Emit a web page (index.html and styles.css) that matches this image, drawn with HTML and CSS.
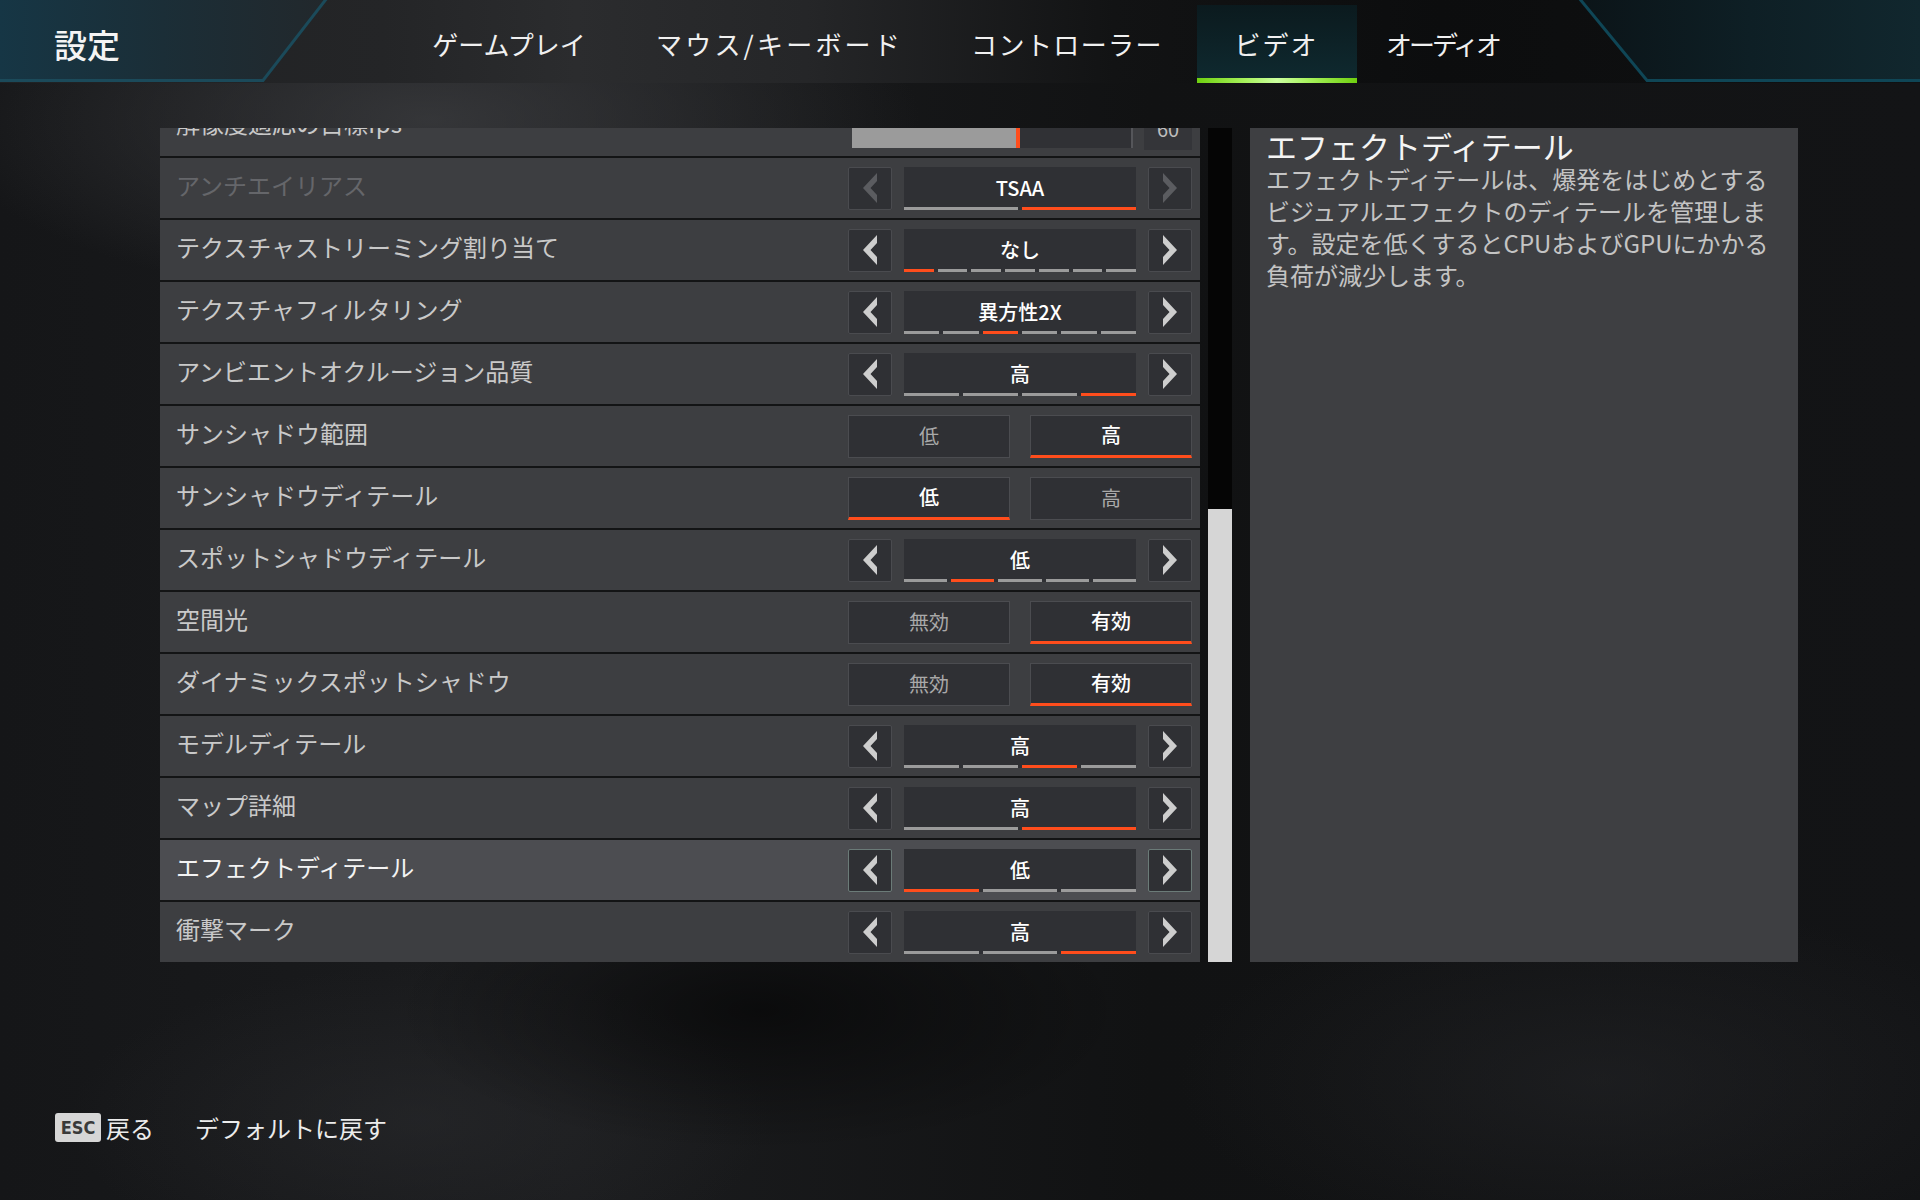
FILE: index.html
```html
<!DOCTYPE html>
<html lang="ja">
<head>
<meta charset="utf-8">
<title>設定</title>
<link rel="stylesheet" href="styles.css">
</head>
<body>
<header class="topbar">
  <div class="hdr-left">
    <svg class="hdr-deco" width="345" height="83" viewBox="0 0 345 83">
      <defs>
        <linearGradient id="gl" x1="0" y1="0" x2="1" y2="0">
          <stop offset="0" stop-color="#163645"/>
          <stop offset="0.5" stop-color="#1b2e37"/>
          <stop offset="1" stop-color="#22282c"/>
        </linearGradient>
      </defs>
      <polygon points="0,0 326,0 263,81 0,81" fill="url(#gl)"/>
      <polyline points="327,-2 263,80.5 0,80.5" fill="none" stroke="#1b4a5a" stroke-width="3"/>
    </svg>
    <h1 class="title">設定</h1>
  </div>
  <nav class="tabs">
    <div class="tab t-game">ゲームプレイ</div>
    <div class="tab t-mouse">マウス/キーボード</div>
    <div class="tab t-ctrl">コントローラー</div>
    <div class="tab t-video active">ビデオ</div>
    <div class="tab t-audio">オーディオ</div>
  </nav>
  <div class="hdr-right">
    <svg class="hdr-deco" width="345" height="83" viewBox="0 0 345 83">
      <defs>
        <linearGradient id="gr" x1="0" y1="0" x2="1" y2="0">
          <stop offset="0" stop-color="#0b1418"/>
          <stop offset="0.5" stop-color="#0e1f25"/>
          <stop offset="1" stop-color="#11272e"/>
        </linearGradient>
      </defs>
      <polygon points="5,0 345,0 345,81 72,81" fill="url(#gr)"/>
      <polyline points="4,-2 72,80.5 345,80.5" fill="none" stroke="#0f4656" stroke-width="3"/>
    </svg>
  </div>
</header>

<main class="content">
  <div class="list">
    <div class="row partial">
      <div class="label">解像度適応の目標fps</div>
      <div class="slider">
        <div class="track"><div class="fill" style="width:164px"></div><div class="knob"></div></div>
        <div class="sval">60</div>
      </div>
    </div>

    <div class="row disabled">
      <div class="label">アンチエイリアス</div>
      <div class="ctl">
        <div class="arrow dis"><svg viewBox="0 0 14 30" width="14" height="30"><polygon points="14,0 0,15 14,30 14,22 7.5,15 14,8"/></svg></div>
        <div class="value"><span class="val-text">TSAA</span><div class="segs"><i class="seg"></i><i class="seg on"></i></div></div>
        <div class="arrow dis"><svg viewBox="0 0 14 30" width="14" height="30"><polygon points="0,0 14,15 0,30 0,22 6.5,15 0,8"/></svg></div>
      </div>
    </div>

    <div class="row">
      <div class="label">テクスチャストリーミング割り当て</div>
      <div class="ctl">
        <div class="arrow"><svg viewBox="0 0 14 30" width="14" height="30"><polygon points="14,0 0,15 14,30 14,22 7.5,15 14,8"/></svg></div>
        <div class="value"><span class="val-text">なし</span><div class="segs"><i class="seg on"></i><i class="seg"></i><i class="seg"></i><i class="seg"></i><i class="seg"></i><i class="seg"></i><i class="seg"></i></div></div>
        <div class="arrow"><svg viewBox="0 0 14 30" width="14" height="30"><polygon points="0,0 14,15 0,30 0,22 6.5,15 0,8"/></svg></div>
      </div>
    </div>

    <div class="row">
      <div class="label">テクスチャフィルタリング</div>
      <div class="ctl">
        <div class="arrow"><svg viewBox="0 0 14 30" width="14" height="30"><polygon points="14,0 0,15 14,30 14,22 7.5,15 14,8"/></svg></div>
        <div class="value"><span class="val-text">異方性2X</span><div class="segs"><i class="seg"></i><i class="seg"></i><i class="seg on"></i><i class="seg"></i><i class="seg"></i><i class="seg"></i></div></div>
        <div class="arrow"><svg viewBox="0 0 14 30" width="14" height="30"><polygon points="0,0 14,15 0,30 0,22 6.5,15 0,8"/></svg></div>
      </div>
    </div>

    <div class="row">
      <div class="label">アンビエントオクルージョン品質</div>
      <div class="ctl">
        <div class="arrow"><svg viewBox="0 0 14 30" width="14" height="30"><polygon points="14,0 0,15 14,30 14,22 7.5,15 14,8"/></svg></div>
        <div class="value"><span class="val-text">高</span><div class="segs"><i class="seg"></i><i class="seg"></i><i class="seg"></i><i class="seg on"></i></div></div>
        <div class="arrow"><svg viewBox="0 0 14 30" width="14" height="30"><polygon points="0,0 14,15 0,30 0,22 6.5,15 0,8"/></svg></div>
      </div>
    </div>

    <div class="row">
      <div class="label">サンシャドウ範囲</div>
      <div class="toggle"><div class="opt">低</div><div class="opt sel">高</div></div>
    </div>

    <div class="row">
      <div class="label">サンシャドウディテール</div>
      <div class="toggle"><div class="opt sel">低</div><div class="opt">高</div></div>
    </div>

    <div class="row">
      <div class="label">スポットシャドウディテール</div>
      <div class="ctl">
        <div class="arrow"><svg viewBox="0 0 14 30" width="14" height="30"><polygon points="14,0 0,15 14,30 14,22 7.5,15 14,8"/></svg></div>
        <div class="value"><span class="val-text">低</span><div class="segs"><i class="seg"></i><i class="seg on"></i><i class="seg"></i><i class="seg"></i><i class="seg"></i></div></div>
        <div class="arrow"><svg viewBox="0 0 14 30" width="14" height="30"><polygon points="0,0 14,15 0,30 0,22 6.5,15 0,8"/></svg></div>
      </div>
    </div>

    <div class="row">
      <div class="label">空間光</div>
      <div class="toggle"><div class="opt">無効</div><div class="opt sel">有効</div></div>
    </div>

    <div class="row">
      <div class="label">ダイナミックスポットシャドウ</div>
      <div class="toggle"><div class="opt">無効</div><div class="opt sel">有効</div></div>
    </div>

    <div class="row">
      <div class="label">モデルディテール</div>
      <div class="ctl">
        <div class="arrow"><svg viewBox="0 0 14 30" width="14" height="30"><polygon points="14,0 0,15 14,30 14,22 7.5,15 14,8"/></svg></div>
        <div class="value"><span class="val-text">高</span><div class="segs"><i class="seg"></i><i class="seg"></i><i class="seg on"></i><i class="seg"></i></div></div>
        <div class="arrow"><svg viewBox="0 0 14 30" width="14" height="30"><polygon points="0,0 14,15 0,30 0,22 6.5,15 0,8"/></svg></div>
      </div>
    </div>

    <div class="row">
      <div class="label">マップ詳細</div>
      <div class="ctl">
        <div class="arrow"><svg viewBox="0 0 14 30" width="14" height="30"><polygon points="14,0 0,15 14,30 14,22 7.5,15 14,8"/></svg></div>
        <div class="value"><span class="val-text">高</span><div class="segs"><i class="seg"></i><i class="seg on"></i></div></div>
        <div class="arrow"><svg viewBox="0 0 14 30" width="14" height="30"><polygon points="0,0 14,15 0,30 0,22 6.5,15 0,8"/></svg></div>
      </div>
    </div>

    <div class="row focus">
      <div class="label">エフェクトディテール</div>
      <div class="ctl">
        <div class="arrow"><svg viewBox="0 0 14 30" width="14" height="30"><polygon points="14,0 0,15 14,30 14,22 7.5,15 14,8"/></svg></div>
        <div class="value"><span class="val-text">低</span><div class="segs"><i class="seg on"></i><i class="seg"></i><i class="seg"></i></div></div>
        <div class="arrow"><svg viewBox="0 0 14 30" width="14" height="30"><polygon points="0,0 14,15 0,30 0,22 6.5,15 0,8"/></svg></div>
      </div>
    </div>

    <div class="row">
      <div class="label">衝撃マーク</div>
      <div class="ctl">
        <div class="arrow"><svg viewBox="0 0 14 30" width="14" height="30"><polygon points="14,0 0,15 14,30 14,22 7.5,15 14,8"/></svg></div>
        <div class="value"><span class="val-text">高</span><div class="segs"><i class="seg"></i><i class="seg"></i><i class="seg on"></i></div></div>
        <div class="arrow"><svg viewBox="0 0 14 30" width="14" height="30"><polygon points="0,0 14,15 0,30 0,22 6.5,15 0,8"/></svg></div>
      </div>
    </div>
  </div>

  <div class="scrollbar"><div class="thumb"></div></div>

  <aside class="panel">
    <h2 class="p-title">エフェクトディテール</h2>
    <p class="p-desc">エフェクトディテールは、爆発をはじめとする<br>ビジュアルエフェクトのディテールを管理しま<br>す。設定を低くするとCPUおよびGPUにかかる<br>負荷が減少します。</p>
  </aside>
</main>

<footer class="footer">
  <span class="esc">ESC</span>
  <span class="back">戻る</span>
  <span class="default">デフォルトに戻す</span>
</footer>
</body>
</html>
```

FILE: styles.css
```css
html, body {
  margin: 0;
  padding: 0;
}

body {
  width: 1920px;
  height: 1200px;
  overflow: hidden;
  font-family: "Noto Sans CJK JP", "Noto Sans", sans-serif;
  color: #dcdcdc;
  background:
    radial-gradient(ellipse 700px 260px at 430px 120px, rgba(62, 63, 66, 0.75), rgba(62, 63, 66, 0) 70%),
    radial-gradient(ellipse 520px 200px at 760px 1010px, rgba(0, 0, 0, 0.55), rgba(0, 0, 0, 0) 70%),
    radial-gradient(ellipse 500px 220px at 420px 1120px, rgba(44, 45, 48, 0.5), rgba(44, 45, 48, 0) 70%),
    radial-gradient(ellipse 600px 260px at 1600px 1080px, rgba(40, 41, 44, 0.45), rgba(40, 41, 44, 0) 70%),
    linear-gradient(90deg, #151618 0%, #1b1c1e 30%, #111213 60%, #131416 100%);
}

/* ---------- header ---------- */
.topbar {
  display: grid;
  grid-template-columns: 345px 1fr 345px;
  height: 83px;
  background: linear-gradient(90deg, #1f2123 0%, #242527 20%, #2b2c2e 30%, #252628 42%, #121314 58%, #0c0d0e 75%, #101112 100%);
}

.hdr-left,
.hdr-right {
  display: grid;
}

.hdr-left > *,
.hdr-right > * {
  grid-area: 1 / 1;
}

.hdr-deco {
  display: block;
}

.title {
  margin: 0;
  padding: 5px 0 0 54px;
  align-self: center;
  font-size: 33px;
  font-weight: 500;
  line-height: 1;
  color: #f4f4f4;
}

.tabs {
  display: flex;
  justify-content: center;
  align-items: flex-end;
  padding-left: 5px;
}

.tab {
  height: 78px;
  box-sizing: border-box;
  padding: 5px 0 5px;
  display: flex;
  align-items: center;
  justify-content: center;
  font-size: 26px;
  line-height: 1;
  color: #f0f0f0;
  white-space: nowrap;
}

.t-game { width: 225px; }
.t-mouse { width: 316px; letter-spacing: 3.2px; }
.t-ctrl { width: 259px; letter-spacing: 1.4px; }
.t-video { width: 160px; letter-spacing: 2px; }
.t-audio { width: 172px; letter-spacing: -3px; }

.tab.active {
  background:
    linear-gradient(90deg, #6fd010 0%, #a7f25c 30%, #cbff9f 50%, #a7f25c 70%, #6fd010 100%) bottom / 100% 5px no-repeat,
    linear-gradient(180deg, #0b1a1e 0%, #0f2a30 100%);
}

/* ---------- main ---------- */
.content {
  display: flex;
  margin: 45px 0 0 160px;
  height: 834px;
}

.list {
  width: 1040px;
  height: 834px;
  overflow: hidden;
  display: flex;
  flex-direction: column;
  gap: 2px;
  background: #131415;
}

.row {
  flex: 0 0 60px;
  display: flex;
  align-items: center;
  padding: 0 8px 0 16px;
  background: #3d3e41;
}

.row.partial {
  margin-top: -32px;
}

.label {
  flex: 1;
  padding-bottom: 6px;
  font-size: 24px;
  line-height: 1.2;
  color: #c9c9c9;
  white-space: nowrap;
}

.row.disabled .label {
  color: #65666a;
}

.row.focus {
  background: #4c4d51;
}

.row.focus .label {
  color: #f3f3f3;
}

.row.focus .arrow {
  border-color: #6b7b78;
}

/* arrow selector */
.ctl {
  display: flex;
  gap: 12px;
  align-items: center;
}

.arrow {
  width: 44px;
  height: 43px;
  box-sizing: border-box;
  border: 1px solid #4a4b4f;
  border-radius: 2px;
  background: #2f3034;
  display: flex;
  align-items: center;
  justify-content: center;
}

.arrow svg {
  display: block;
  fill: #cdcdcd;
}

.arrow.dis svg {
  fill: #5b5c60;
}

.value {
  width: 232px;
  height: 43px;
  background: #2f3034;
  display: grid;
}

.value > * {
  grid-area: 1 / 1;
}

.val-text {
  align-self: center;
  justify-self: center;
  font-size: 20px;
  font-weight: 500;
  line-height: 1;
  color: #ffffff;
}

.segs {
  align-self: end;
  display: flex;
  gap: 4px;
  height: 3px;
}

.seg {
  flex: 1;
  background: #9b9b9b;
}

.seg.on {
  background: #ff4d1c;
}

/* toggle */
.toggle {
  display: flex;
  gap: 20px;
}

.opt {
  width: 162px;
  height: 43px;
  box-sizing: border-box;
  border: 1px solid #4b4c50;
  background: #2f3034;
  display: flex;
  align-items: center;
  justify-content: center;
  font-size: 20px;
  line-height: 1;
  color: #a9a9a9;
}

.opt.sel {
  color: #ffffff;
  font-weight: 500;
  border-bottom: 3px solid #ff4d1c;
}

/* slider */
.slider {
  display: flex;
  align-items: center;
  width: 340px;
}

.track {
  width: 281px;
  height: 43px;
  box-sizing: border-box;
  border-right: 2px solid #55565a;
  background: #303135;
  display: flex;
}

.fill {
  background: #9b9b9b;
}

.knob {
  width: 4px;
  background: #ff4d1c;
}

.sval {
  width: 48px;
  height: 43px;
  margin-left: 11px;
  margin-top: 5px;
  background: #343539;
  display: flex;
  align-items: center;
  justify-content: center;
  font-size: 20px;
  color: #bdbdbd;
}

/* scrollbar */
.scrollbar {
  width: 24px;
  margin-left: 8px;
  box-sizing: border-box;
  padding-top: 381px;
  background: #050505;
  display: flex;
  flex-direction: column;
}

.thumb {
  flex: 1;
  background: #d6d6d6;
}

/* info panel */
.panel {
  width: 548px;
  margin-left: 18px;
  box-sizing: border-box;
  padding: 0 16px;
  background: #3e3f42;
}

.p-title {
  margin: 0;
  font-size: 31px;
  font-weight: 400;
  line-height: 35px;
  color: #f4f4f4;
  white-space: nowrap;
}

.p-desc {
  margin: 0;
  font-size: 24px;
  line-height: 32px;
  color: #c4c4c4;
  white-space: nowrap;
}

/* footer */
.footer {
  display: flex;
  align-items: center;
  margin: 151px 0 0 55px;
  height: 29px;
}

.esc {
  width: 46px;
  height: 29px;
  box-sizing: border-box;
  border-radius: 3px;
  background: #d6d6d6;
  color: #3a3a3a;
  font-family: "DejaVu Sans Condensed", "DejaVu Sans", sans-serif;
  font-stretch: condensed;
  font-size: 18px;
  font-weight: 700;
  display: flex;
  align-items: center;
  justify-content: center;
}

.back {
  margin-left: 5px;
  font-size: 24px;
  line-height: 1;
  color: #ececec;
}

.default {
  margin-left: 41px;
  font-size: 24px;
  line-height: 1;
  color: #ececec;
}
```
